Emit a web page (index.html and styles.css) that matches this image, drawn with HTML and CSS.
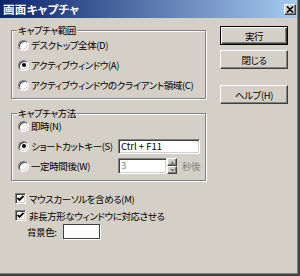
FILE: index.html
```html
<!DOCTYPE html>
<html lang="ja">
<head>
<meta charset="utf-8">
<link rel="stylesheet" href="styles.css">
</head>
<body>
<div class="window">
  <div class="titlebar">
    <span class="title">画面キャプチャ</span>
    <span class="close"><svg width="8" height="7" viewBox="0 0 8 7"><path d="M1 0.5 L7 6.5 M7 0.5 L1 6.5" stroke="#000" stroke-width="1.6" fill="none"/></svg></span>
  </div>
  <div class="main">
    <div class="left">
      <div class="group g1">
        <div class="legend">キャプチャ範囲</div>
        <div class="rows r1">
          <div class="row"><span class="radio"></span><span>デスクトップ全体(D)</span></div>
          <div class="row"><span class="radio on"></span><span>アクティブウィンドウ(A)</span></div>
          <div class="row"><span class="radio"></span><span>アクティブウィンドウのクライアント領域(C)</span></div>
        </div>
      </div>
      <div class="group g2">
        <div class="legend">キャプチャ方法</div>
        <div class="rows r2">
          <div class="row"><span class="radio"></span><span>即時(N)</span></div>
          <div class="row"><span class="radio on"></span><span class="lbl">ショートカットキー(S)</span><span class="edit key">Ctrl + F11</span></div>
          <div class="row"><span class="radio"></span><span class="lbl">一定時間後(W)</span><span class="edit num">3</span><span class="spin"><span class="sb"><svg width="5" height="3" viewBox="0 0 5 3"><path d="M2.5 0 L5 3 L0 3 Z" fill="#808080"/></svg></span><span class="sb"><svg width="5" height="3" viewBox="0 0 5 3"><path d="M0 0 L5 0 L2.5 3 Z" fill="#808080"/></svg></span></span><span class="gray">秒後</span></div>
        </div>
      </div>
      <div class="checks">
        <div class="crow"><span class="check"><svg width="7" height="7" viewBox="0 0 7 7"><polyline points="0.5,3 2.5,5 6.5,1" stroke="#000" stroke-width="1.8" fill="none"/></svg></span><span>マウスカーソルを含める(M)</span></div>
        <div class="crow"><span class="check"><svg width="7" height="7" viewBox="0 0 7 7"><polyline points="0.5,3 2.5,5 6.5,1" stroke="#000" stroke-width="1.8" fill="none"/></svg></span><span>非長方形なウィンドウに対応させる</span></div>
        <div class="bgrow"><span>背景色:</span><span class="swatch"></span></div>
      </div>
    </div>
    <div class="right">
      <div class="btn default">実行</div>
      <div class="btn second">閉じる</div>
      <div class="btn help">ヘルプ(H)</div>
    </div>
  </div>
</div>
</body>
</html>
```
FILE: styles.css
```css
html, body {
  margin: 0;
  padding: 0;
  background: #D4D0C8;
}
body {
  font-family: "Noto Sans CJK JP", "Noto Sans", sans-serif;
  font-size: 9.5px;
  line-height: 12px;
  letter-spacing: -0.4px;
  font-feature-settings: "palt";
  color: #000;
}
.window {
  width: 300px;
  height: 276px;
  box-sizing: border-box;
  background: #D4D0C8;
  border-right: 2px solid #404040;
  border-bottom: 2px solid #404040;
  box-shadow: inset -1px -1px 0 #808080;
  overflow: hidden;
}
.titlebar {
  height: 18px;
  margin-right: 1px;
  background: linear-gradient(to right, #0A246A, #A6CAF0);
  display: flex;
  align-items: center;
  justify-content: space-between;
}
.title {
  color: #fff;
  font-weight: bold;
  font-size: 11.5px;
  letter-spacing: 0.3px;
  line-height: 18px;
  padding-left: 3px;
}
.close {
  width: 12px;
  height: 11px;
  box-sizing: border-box;
  margin-right: 1px;
  background: #D4D0C8;
  border: 1px solid;
  border-color: #fff #404040 #404040 #fff;
  box-shadow: inset -1px -1px 0 #808080;
  display: flex;
  align-items: center;
  justify-content: center;
}
.main {
  display: flex;
  align-items: flex-start;
}
.left {
  margin-left: 11px;
  width: 195px;
  padding-top: 12px;
}
.right {
  margin-left: 14px;
  width: 68px;
  padding-top: 8px;
  display: flex;
  flex-direction: column;
}
.group {
  box-sizing: border-box;
  border: 1px solid #808080;
  box-shadow: 1px 1px 0 #fff, inset 1px 1px 0 #fff;
}
.g1 { height: 69px; }
.g2 { height: 68px; margin-top: 14px; }
.legend {
  width: fit-content;
  margin: -7px 0 0 5px;
  padding: 0 1px;
  height: 12px;
  line-height: 12px;
  background: #D4D0C8;
}
.r1 { margin-top: -1px; }
.r2 { margin-top: -3px; }
.row {
  height: 20px;
  display: flex;
  align-items: center;
  white-space: nowrap;
}
.radio {
  position: relative;
  flex: none;
  width: 9px;
  height: 9px;
  margin: 0 2px 0 6px;
  border-radius: 50%;
  background: #fff;
  border: 1px solid;
  border-color: #808080 #fff #fff #808080;
  box-shadow: inset 1px 1px 0 #404040, inset -1px -1px 0 #D4D0C8;
}
.radio.on::after {
  content: "";
  position: absolute;
  left: 2.5px;
  top: 2.5px;
  width: 4px;
  height: 4px;
  border-radius: 50%;
  background: #000;
}
.lbl {
  flex: none;
  width: 87px;
}
.edit {
  box-sizing: border-box;
  height: 15px;
  background: #fff;
  border: 1px solid;
  border-color: #808080 #fff #fff #808080;
  box-shadow: inset 1px 1px 0 #404040, inset -1px -1px 0 #D4D0C8;
  line-height: 13px;
  padding-left: 2px;
  letter-spacing: 0;
}
.key { width: 82px; }
.num {
  width: 49px;
  height: 16px;
  color: #808080;
}
.spin {
  width: 10px;
  height: 16px;
  display: flex;
  flex-direction: column;
}
.sb {
  flex: 1;
  box-sizing: border-box;
  border: 1px solid;
  border-color: #fff #404040 #404040 #fff;
  box-shadow: inset -1px -1px 0 #808080;
  display: flex;
  align-items: center;
  justify-content: center;
}
.gray {
  color: #808080;
  margin-left: 5px;
}
.checks {
  margin-top: 9px;
}
.crow {
  height: 17px;
  display: flex;
  align-items: center;
  white-space: nowrap;
}
.check {
  flex: none;
  box-sizing: border-box;
  width: 11px;
  height: 11px;
  margin: 0 3px 0 4px;
  background: #fff;
  border: 1px solid;
  border-color: #808080 #fff #fff #808080;
  box-shadow: inset 1px 1px 0 #404040, inset -1px -1px 0 #D4D0C8;
  display: flex;
  align-items: center;
  justify-content: center;
}
.bgrow {
  height: 15px;
  display: flex;
  align-items: center;
  padding-left: 16px;
}
.swatch {
  box-sizing: border-box;
  width: 37px;
  height: 15px;
  margin-left: 6px;
  background: #fff;
  border: 1px solid #404040;
  box-shadow: 1px 1px 0 #fff;
}
.btn {
  box-sizing: border-box;
  height: 19px;
  display: flex;
  align-items: center;
  justify-content: center;
  border: 1px solid;
  border-color: #fff #404040 #404040 #fff;
  box-shadow: inset -1px -1px 0 #808080;
}
.btn.default {
  border: 1px solid #000;
  box-shadow: inset 1px 1px 0 #fff, inset -1px -1px 0 #404040, inset -2px -2px 0 #808080;
}
.second { margin-top: 5px; }
.help { margin-top: 16px; }
```
